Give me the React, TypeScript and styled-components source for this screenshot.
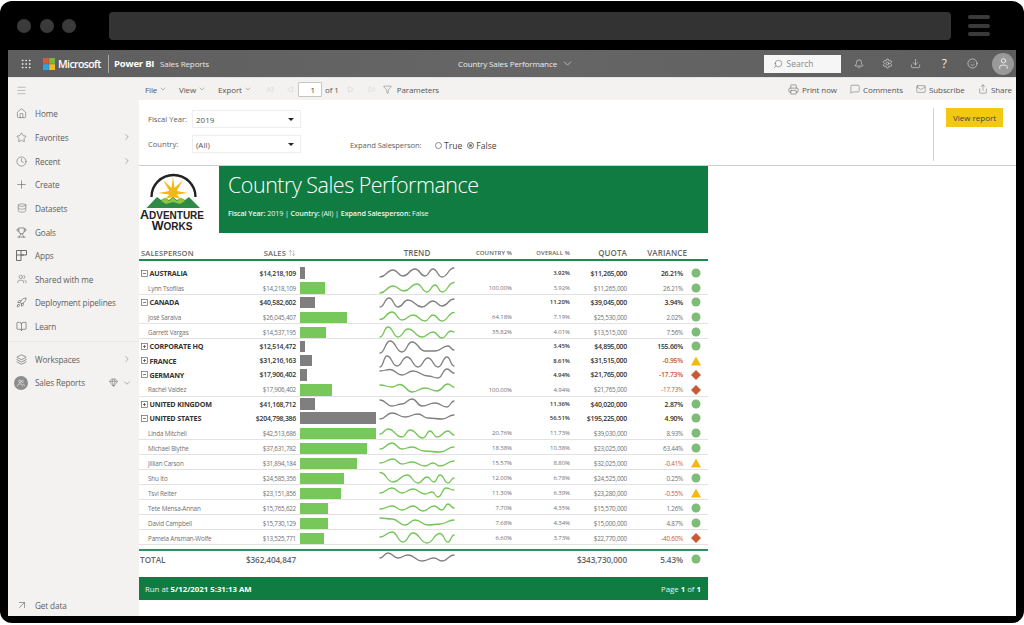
import React from 'react';
import styled, { createGlobalStyle } from 'styled-components';
import {
  Home, Star, Clock, Plus, Database, Trophy, Users, Rocket, BookOpen, ChevronRight, ChevronDown, Gem,
  ArrowUpRight, Bell, Settings, Download, Search, Smile, User, Printer, MessageSquare, Mail, Share,
  Filter, ArrowUpDown, Menu, Grip, SkipBack, Play, SkipForward, Layers
} from 'lucide-react';

const Global = createGlobalStyle`
  html, body { margin: 0; padding: 0; background: #fff; }
  body { font-family: "Open Sans", "Liberation Sans", sans-serif; overflow: hidden; }
  #root { width: 1024px; height: 625px; }
`;

const Frame = styled.div`
  margin-top: 1px; width: 1024px; height: 622px; box-sizing: border-box; background: #000;
  border-radius: 12px; padding: 0 8px 7px; display: flex; flex-direction: column;
`;
const BrowserBar = styled.div`
  height: 49px; flex: none; display: flex; align-items: center; padding: 0 26px 0 9px;
`;
const Dot = styled.span`
  width: 14px; height: 14px; border-radius: 50%; background: #3a3a3a; margin-right: 8.5px; flex: none;
`;
const AddressBar = styled.div`
  flex: 1; height: 28px; background: #333; border-radius: 4px; margin: 0 17px 0 24px;
`;
const Burger = styled.div`
  width: 22px; display: flex; flex-direction: column; gap: 4.5px;
  span { height: 4px; border-radius: 2px; background: #3a3a3a; }
`;
const AppHeader = styled.header`
  height: 28px; flex: none; background: linear-gradient(90deg,#5e5e5e,#666 50%,#5e5e5e); display: flex; align-items: center;
  color: #fff; border-bottom: 1px solid #e4e4e4; position: relative; box-sizing: border-box;
`;
const Waffle = styled.span`
  display: flex; width: 35px; justify-content: center; color: #eee;
`;
const MsLogo = styled.svg`
  width: 12px; height: 12px; flex: none;
`;
const MsWord = styled.span`
  font-size: 10.5px; font-weight: 600; margin-left: 3px; letter-spacing: -0.6px; width: 50px;
`;
const HeadDivider = styled.span`
  width: 1px; height: 18px; background: #aaa; margin-right: 5px;
`;
const PowerBi = styled.span`
  font-size: 9.5px; font-weight: 700; width: 46px; letter-spacing: -0.2px;
`;
const HeadLabel = styled.span`
  font-size: 8px; color: #e8e8e8; letter-spacing: -0.1px;
`;
const HeadCenter = styled.div`
  position: absolute; left: 450px; display: flex; align-items: center; gap: 4px; font-size: 8px; color: #eee; letter-spacing: -0.1px;
`;
const HeadRight = styled.div`
  margin-left: auto; display: flex; align-items: center; color: #eee;
`;
const SearchBox = styled.div`
  width: 77px; height: 18px; background: #f6f6f6; display: flex; align-items: center; gap: 4px; padding-left: 9px; box-sizing: border-box;
  font-size: 8.5px; color: #8a8a8a; margin-right: 4px;
`;
const HeadIcon = styled.span`
  width: 28.5px; display: flex; justify-content: center; font-size: 12px;
`;
const Avatar = styled.span`
  width: 22px; height: 22px; border-radius: 50%; background: #9a9a9a; display: flex; align-items: center; justify-content: center; margin-right: 2px; margin-left: 5px;
`;
const Body = styled.div`
  flex: 1; display: flex; min-height: 0; background: #fff;
`;
const Sidebar = styled.nav`
  width: 131px; flex: none; background: #f3f2f1; display: flex; flex-direction: column; color: #605e5c; padding-bottom: 1px;
`;
const SideTop = styled.div`
  height: 24px; display: flex; align-items: center; padding-left: 8px; color: #a8a8a8; flex: none;
`;
const NavRow = styled.div`
  height: 23.65px; flex: none; display: flex; align-items: center; font-size: 8.2px; padding-left: 7px; letter-spacing: -0.12px;
`;
const NavIcon = styled.span`
  width: 13px; display: flex; justify-content: center; margin-right: 7px;
`;
const NavEnd = styled.span`
  margin-left: auto; margin-right: 7px; display: flex; align-items: center; gap: 4px; color: #666;
`;
const NavDivider = styled.div`
  height: 1px; background: #e9e8e7; margin: 3px 0 5px;
`;
const BadgeIcon = styled.span`
  width: 14px; height: 14px; border-radius: 50%; background: #8c8c8c; color: #fff; display: flex; align-items: center; justify-content: center; margin: 0 7px 0 -1px;
`;
const BottomRow = styled(NavRow)`
  margin-top: auto; height: 20px;
`;
const Main = styled.main`
  flex: 1; min-width: 0; display: flex; flex-direction: column;
`;
const Toolbar = styled.div`
  height: 22px; flex: none; background: #f3f2f1; display: flex; align-items: center; font-size: 8px; color: #555; padding-left: 6px; letter-spacing: -0.1px;
`;
const Menu1 = styled.span<{ $w: number }>`
  display: flex; align-items: center; gap: 2px; width: ${p => p.$w}px;
`;
const Pager = styled.span<{ $w: number }>`
  display: flex; width: ${p => p.$w}px; color: #d4d3d2; justify-content: center;
`;
const PageInput = styled.span`
  width: 24px; height: 15px; box-sizing: border-box; border: 1px solid #c8c6c4; background: #fff; text-align: right; padding-right: 6px; line-height: 13px; border-radius: 1px; color: #444; margin-right: 3px;
`;
const ToolRight = styled.div`
  margin-left: auto; display: flex; align-items: center; margin-right: 3px;
`;
const ToolBtn = styled.span<{ $w: number }>`
  display: flex; align-items: center; gap: 3px; width: ${p => p.$w}px;
`;
const Params = styled.section`
  height: 66px; flex: none; box-sizing: border-box; border-bottom: 1.5px solid #d0d0d0; display: flex; padding: 8px 13px 4px 9px; font-size: 7.6px; color: #605e5c;
`;
const ParamGrid = styled.div`
  display: grid; grid-template-columns: 44px 109px; grid-auto-rows: 18px; row-gap: 7px; align-items: center; margin-top: 2px;
`;
const ParamSelect = styled.div`
  height: 18px; box-sizing: border-box; border: 1px solid #eee; display: flex; align-items: center; justify-content: space-between; padding: 0 6px 0 3px; font-size: 8px; color: #555;
  &::after { content: ""; border: 3px solid transparent; border-top: 3.5px solid #222; border-bottom: 0; }
`;
const Expand = styled.div`
  display: flex; align-items: center; margin: 28px 0 0 49px; height: 18px;
`;
const ExpandLabel = styled.span`
  width: 85px; letter-spacing: -0.1px;
`;
const Radio = styled.span<{ $on?: boolean }>`
  width: 7px; height: 7px; border-radius: 50%; border: 1px solid #888; box-sizing: border-box; background: ${p => p.$on ? '#777' : '#fff'};
  box-shadow: ${p => p.$on ? 'inset 0 0 0 1px #fff' : 'none'}; margin: 1px 2px 0 0;
`;
const RadioText = styled.span`
  font-size: 8.6px; color: #444; margin-right: 5px; padding-top: 1px;
`;
const ParamDivider = styled.div`
  width: 1px; background: #d4d4d4; height: 53px; margin-left: auto;
`;
const ViewReport = styled.button`
  width: 57px; height: 19px; border: 0; padding: 0; background: #f2c811; font: inherit; font-size: 8px; color: #444; margin-left: 12px;
`;
const Report = styled.div`
  width: 569px; flex: 1; display: flex; flex-direction: column; min-height: 0;
`;
const Banner = styled.div`
  display: flex; height: 67px; flex: none;
`;
const LogoCell = styled.div`
  width: 80px; flex: none; display: flex; flex-direction: column; align-items: center;
`;
const LogoSvg = styled.svg`
  width: 80px; height: 44px; flex: none;
`;
const LogoLine = styled.div`
  font-family: "Liberation Sans", sans-serif; font-weight: 700; font-size: 10px; line-height: 11px; height: 11px; color: #222; margin-left: -14px;
  &::first-letter { font-size: 12.5px; }
`;
const TitleBlock = styled.div`
  flex: 1; background: #107c41; color: #fff; padding-left: 9px; display: flex; flex-direction: column;
`;
const Title = styled.h1`
  font-size: 21.5px; font-weight: 300; margin: 4px 0 0; line-height: 30px; letter-spacing: -0.5px;
`;
const SubTitle = styled.div`
  font-size: 7.2px; margin-top: 8px; color: #eef6f0; letter-spacing: -0.1px;
  b { font-weight: 600; }
`;
const columns = '101px 56px 84px 74px 58px 58px 57px 56px 25px';
const HeadRow = styled.div`
  display: grid; grid-template-columns: ${columns}; height: 27.5px; align-items: end; box-sizing: border-box;
  border-bottom: 2px solid #1f8a50; flex: none; color: #666; font-weight: 600; margin-bottom: 5.5px;
`;
const HeadCell = styled.div<{ $small?: boolean; $align?: string; $span?: number; $pr?: number }>`
  font-size: ${p => p.$small ? 6 : p.$align === 'left' ? 7.6 : 8}px; text-align: ${p => p.$align || 'right'}; white-space: nowrap; line-height: 12px;
  grid-column: span ${p => p.$span || 1}; padding-right: ${p => p.$pr || 0}px; padding-left: ${p => p.$align === 'left' ? 2 : 0}px;
  letter-spacing: 0.1px;
`;
const SortCell = styled.div`
  font-size: 7.6px; display: flex; justify-content: flex-end; align-items: center; gap: 2px; line-height: 12px; letter-spacing: .1px;
`;
const Row = styled.div<{ $group?: boolean; $total?: boolean }>`
  display: grid; grid-template-columns: ${columns}; align-items: center; flex: none;
  height: ${p => p.$total ? 16 : p.$group ? 14.2 : 15}px; box-sizing: border-box;
  padding-top: ${p => (p.$group || p.$total) ? 0 : 1}px;
  border-bottom: ${p => (p.$group || p.$total) ? '0' : '1px solid #e2e2e2'};
  font-size: ${p => p.$total ? 8.2 : p.$group ? 6.9 : 6.3}px; font-weight: ${p => (p.$group || p.$total) ? 600 : 400};
  letter-spacing: ${p => p.$total ? -0.1 : p.$group ? -0.25 : -0.23}px;
  color: ${p => p.$total ? '#666' : p.$group ? '#333' : '#707070'};
`;
const NameCell = styled.div<{ $group?: boolean; $total?: boolean }>`
  display: flex; align-items: center; white-space: nowrap; gap: 1.5px; padding-left: ${p => p.$group ? 2 : p.$total ? 1 : 9}px;
  font-weight: ${p => p.$group ? 700 : 'inherit'}; font-size: ${p => p.$group ? '7.2px' : 'inherit'};
  letter-spacing: ${p => p.$group ? '-0.2px' : p.$total ? '0' : '-0.15px'};
`;
const Num = styled.div<{ $neg?: boolean; $small?: boolean }>`
  text-align: right; white-space: nowrap; color: ${p => p.$neg ? '#c9583a' : 'inherit'}; font-size: ${p => p.$small ? '6px' : 'inherit'}; letter-spacing: ${p => p.$small ? '-0.05px' : 'inherit'};
`;
const BarCell = styled.div`
  padding-left: 4px; display: flex; align-items: center;
`;
const Bar = styled.div<{ $group?: boolean }>`
  height: 11.5px; background: ${p => p.$group ? '#7f7f7f' : '#77c75a'};
`;
const TrendSvg = styled.svg`
  width: 74px; height: 14px; display: block; overflow: visible;
`;
const StatusCell = styled.div`
  display: flex; justify-content: flex-end; padding-right: 7px;
`;
const EndLine = styled.div`
  height: 2px; background: #2f9160; margin-top: 4px; flex: none;
`;
const Footer = styled.footer`
  height: 23px; margin-top: 10px; background: #107c41; color: #eaf4ee; display: flex; align-items: center; justify-content: space-between; padding: 0 7px 0 6px; font-size: 7.8px; flex: none;
  b { font-weight: 700; color: #fff; }
`;

type RowData = {
  name: string; group?: boolean; exp?: '+' | '-'; sales: number; trend: number[]; country?: string; overall: string; quota: string; variance: string; status: 'ok' | 'warn' | 'bad';
};
const rows: RowData[] = [
  { name: 'AUSTRALIA', group: true, exp: '-', sales: 14218109, trend: [0,11,13,4,23,10,35,3,45,10,53,3,62,11,74,2], overall: '3.92%', quota: '$11,265,000', variance: '26.21%', status: 'ok' },
  { name: 'Lynn Tsoflias', sales: 14218109, trend: [0,12,13,5,24,10,37,3,47,11,55,4,62,11,74,1.5], country: '100.00%', overall: '3.92%', quota: '$11,265,000', variance: '26.21%', status: 'ok' },
  { name: 'CANADA', group: true, exp: '-', sales: 40582602, trend: [0,12,9,3,18,12,28,5,42,12,53,6,62,11,74,4], overall: '11.20%', quota: '$39,045,000', variance: '3.94%', status: 'ok' },
  { name: 'José Saraiva', sales: 26045407, trend: [0,9.5,12,2,22,10,33,5,45,11,53,5,62,11,74,2.5], country: '64.18%', overall: '7.19%', quota: '$25,530,000', variance: '2.02%', status: 'ok' },
  { name: 'Garrett Vargas', sales: 14537195, trend: [0,12,8,2,18,12,28,4,42,12,53,7,62,13,71,6,74,7], country: '35.82%', overall: '4.01%', quota: '$13,515,000', variance: '7.56%', status: 'ok' },
  { name: 'CORPORATE HQ', group: true, exp: '+', sales: 12514472, trend: [0,14,10,2,22,13,32,3,45,12,55,12,68,7,74,11], overall: '3.45%', quota: '$4,895,000', variance: '155.66%', status: 'ok' },
  { name: 'FRANCE', group: true, exp: '+', sales: 31216163, trend: [0,13,7,2,17,12,27,3,38,13,48,4,58,13,67,3,74,12], overall: '8.61%', quota: '$31,515,000', variance: '-0.95%', status: 'warn' },
  { name: 'GERMANY', group: true, exp: '-', sales: 17906402, trend: [0,3,10,1.5,22,7,33,3,48,8,58,10,67,1,74,5], overall: '4.94%', quota: '$21,765,000', variance: '-17.73%', status: 'bad' },
  { name: 'Rachel Valdez', sales: 17906402, trend: [0,2,12,4,20,1.5,32,9,45,5,57,8,68,1,74,4], country: '100.00%', overall: '4.94%', quota: '$21,765,000', variance: '-17.73%', status: 'bad' },
  { name: 'UNITED KINGDOM', group: true, exp: '+', sales: 41168712, trend: [0,3,12,9,22,7,32,2,42,9,55,6,67,10,74,4], overall: '11.36%', quota: '$40,020,000', variance: '2.87%', status: 'ok' },
  { name: 'UNITED STATES', group: true, exp: '-', sales: 204798386, trend: [0,8,12,2,25,6,38,3,48,7,62,8,74,4], overall: '56.51%', quota: '$195,225,000', variance: '4.90%', status: 'ok' },
  { name: 'Linda Mitchell', sales: 42513686, trend: [0,8,8,3,22,11,30,4,43,12,50,5,57,11,68,5,74,9], country: '20.76%', overall: '11.73%', quota: '$39,030,000', variance: '8.93%', status: 'ok' },
  { name: 'Michael Blythe', sales: 37631782, trend: [0,8,12,2,22,8,32,6,44,10,60,11,74,6], country: '18.38%', overall: '10.38%', quota: '$23,025,000', variance: '63.44%', status: 'ok' },
  { name: 'Jillian Carson', sales: 31894184, trend: [0,7,13,3,22,8,32,6,45,10,53,7,60,10,74,5], country: '15.57%', overall: '8.80%', quota: '$32,025,000', variance: '-0.41%', status: 'warn' },
  { name: 'Shu Ito', sales: 24585356, trend: [0,1.5,13,11,27,4,38,12,47,6,54,11,60,4,68,12,74,7], country: '12.00%', overall: '6.78%', quota: '$24,525,000', variance: '0.25%', status: 'ok' },
  { name: 'Tsvi Reiter', sales: 23151856, trend: [0,7,12,2,22,7,33,3,45,8,52,6,58,11,66,2,74,4], country: '11.30%', overall: '6.39%', quota: '$23,280,000', variance: '-0.55%', status: 'warn' },
  { name: 'Tete Mensa-Annan', sales: 15765622, trend: [0,8,12,5,22,9,33,5,43,10,54,5,62,9,68,3,74,7], country: '7.70%', overall: '4.35%', quota: '$15,570,000', variance: '1.26%', status: 'ok' },
  { name: 'David Campbell', sales: 15730129, trend: [0,2,12,3,25,9,35,4,48,9,60,8,74,4], country: '7.68%', overall: '4.34%', quota: '$15,000,000', variance: '4.87%', status: 'ok' },
  { name: 'Pamela Ansman-Wolfe', sales: 13525771, trend: [0,6,12,1,23,11,33,2,47,12,60,2.5,68,11,74,4], country: '6.60%', overall: '3.73%', quota: '$22,770,000', variance: '-40.60%', status: 'bad' },
];

const wave = (p: number[]) => {
  let d = `M${p[0]} ${p[1]}`;
  for (let i = 2; i < p.length; i += 2) {
    const m = (p[i - 2] + p[i]) / 2;
    d += ` C${m} ${p[i - 1]} ${m} ${p[i + 1]} ${p[i]} ${p[i + 1]}`;
  }
  return d;
};

const Trend = ({ data, group }: { data: number[]; group?: boolean }) => (
  <TrendSvg viewBox="0 0 74 14">
    <path d={wave(data)} fill="none" stroke={group ? '#808080' : '#74c557'} strokeWidth="1.3" strokeLinecap="round" />
  </TrendSvg>
);

const Status = ({ kind }: { kind: RowData['status'] }) => (
  <svg width="10" height="10" viewBox="0 0 10 10">
    {kind === 'ok' && <circle cx="5" cy="5" r="4.5" fill="#7fbc78" />}
    {kind === 'warn' && <path d="M5 .5 L10 9.5 H0 Z" fill="#f2b90f" />}
    {kind === 'bad' && <path d="M5 0 L10 5 L5 10 L0 5 Z" fill="#c85b36" />}
  </svg>
);

const Expander = ({ kind }: { kind: '+' | '-' }) => (
  <svg width="7" height="7" viewBox="0 0 7 7">
    <rect x=".5" y=".5" width="6" height="6" fill="none" stroke="#666" strokeWidth=".7" />
    <path d={kind === '+' ? 'M2 3.5H5M3.5 2V5' : 'M2 3.5H5'} stroke="#444" strokeWidth=".7" />
  </svg>
);

const AppsIcon = () => (
  <svg width="11" height="11" viewBox="0 0 11 11" fill="none" stroke="#605e5c" strokeWidth=".9">
    <path d="M.5.5H5V10.5H.5ZM5 .5H10.5V5H.5M5 5H8" />
  </svg>
);

const navItems: [string, React.ReactNode, boolean?][] = [
  ['Home', <Home size={11} strokeWidth={1.2} />],
  ['Favorites', <Star size={11} strokeWidth={1.2} />, true],
  ['Recent', <Clock size={11} strokeWidth={1.2} />, true],
  ['Create', <Plus size={13} strokeWidth={1.1} />],
  ['Datasets', <Database size={10} strokeWidth={1.2} />],
  ['Goals', <Trophy size={11} strokeWidth={1.4} />],
  ['Apps', <AppsIcon />],
  ['Shared with me', <Users size={10} strokeWidth={1.2} />],
  ['Deployment pipelines', <Rocket size={11} strokeWidth={1.4} />],
  ['Learn', <BookOpen size={11} strokeWidth={1.4} />],
];

const money = (n: number) => '$' + n.toLocaleString('en-US');

export default function App() {
  return (
    <>
      <Global />
      <Frame>
        <BrowserBar>
          <Dot /><Dot /><Dot />
          <AddressBar />
          <Burger><span /><span /><span /></Burger>
        </BrowserBar>
        <AppHeader>
          <Waffle><Grip size={12} strokeWidth={1.6} /></Waffle>
          <MsLogo viewBox="0 0 12 12">
            <rect width="5.8" height="5.8" fill="#d9593a" />
            <rect x="6.2" width="5.8" height="5.8" fill="#79b83a" />
            <rect y="6.2" width="5.8" height="5.8" fill="#2ea3e0" />
            <rect x="6.2" y="6.2" width="5.8" height="5.8" fill="#f6bb1b" />
          </MsLogo>
          <MsWord>Microsoft</MsWord>
          <HeadDivider />
          <PowerBi>Power BI</PowerBi>
          <HeadLabel>Sales Reports</HeadLabel>
          <HeadCenter>Country Sales Performance <ChevronDown size={13} strokeWidth={1.1} /></HeadCenter>
          <HeadRight>
            <SearchBox><Search size={10} strokeWidth={1.2} color="#555" style={{ transform: 'scaleX(-1)' }} />Search</SearchBox>
            <HeadIcon><Bell size={10} strokeWidth={1.4} /></HeadIcon>
            <HeadIcon><Settings size={11} strokeWidth={1.3} /></HeadIcon>
            <HeadIcon><Download size={11} strokeWidth={1.2} /></HeadIcon>
            <HeadIcon>?</HeadIcon>
            <HeadIcon><Smile size={11} strokeWidth={1.3} /></HeadIcon>
            <Avatar><User size={13} strokeWidth={1.4} color="#fff" /></Avatar>
          </HeadRight>
        </AppHeader>
        <Body>
          <Sidebar>
            <SideTop><Menu size={11} strokeWidth={1.6} /></SideTop>
            {navItems.map(([label, icon, more]) => (
              <NavRow key={label}>
                <NavIcon>{icon}</NavIcon>{label}
                {more && <NavEnd><ChevronRight size={10} strokeWidth={1.2} /></NavEnd>}
              </NavRow>
            ))}
            <NavDivider />
            <NavRow>
              <NavIcon><Layers size={11} strokeWidth={1.4} /></NavIcon>Workspaces
              <NavEnd><ChevronRight size={10} strokeWidth={1.2} /></NavEnd>
            </NavRow>
            <NavRow>
              <BadgeIcon><Users size={8} strokeWidth={1.6} /></BadgeIcon>Sales Reports
              <NavEnd><Gem size={9} strokeWidth={1.4} /> <ChevronDown size={10} strokeWidth={1.2} /></NavEnd>
            </NavRow>
            <BottomRow>
              <NavIcon><ArrowUpRight size={12} strokeWidth={1.2} /></NavIcon>Get data
            </BottomRow>
          </Sidebar>
          <Main>
            <Toolbar>
              <Menu1 $w={34}>File <ChevronDown size={8} strokeWidth={1.2} /></Menu1>
              <Menu1 $w={39}>View <ChevronDown size={8} strokeWidth={1.2} /></Menu1>
              <Menu1 $w={40}>Export <ChevronDown size={8} strokeWidth={1.2} /></Menu1>
              <Pager $w={25}><SkipBack size={7} /></Pager>
              <Pager $w={15}><Play size={7} style={{ transform: 'scaleX(-1)' }} /></Pager>
              <PageInput>1</PageInput>
              of 1
              <Pager $w={24}><Play size={7} /></Pager>
              <Pager $w={17}><SkipForward size={7} /></Pager>
              <Pager $w={16} style={{ color: '#555', marginRight: 1 }}><Filter size={9} strokeWidth={1.1} /></Pager>
              Parameters
              <ToolRight>
                <ToolBtn $w={62}><Printer size={11} strokeWidth={1.1} />Print now</ToolBtn>
                <ToolBtn $w={66}><MessageSquare size={10} strokeWidth={1.1} />Comments</ToolBtn>
                <ToolBtn $w={62}><Mail size={10} strokeWidth={1.1} />Subscribe</ToolBtn>
                <ToolBtn $w={35}><Share size={10} strokeWidth={1.1} />Share</ToolBtn>
              </ToolRight>
            </Toolbar>
            <Params>
              <ParamGrid>
                <span>Fiscal Year:</span><ParamSelect>2019</ParamSelect>
                <span>Country:</span><ParamSelect>(All)</ParamSelect>
              </ParamGrid>
              <Expand>
                <ExpandLabel>Expand Salesperson:</ExpandLabel>
                <Radio /><RadioText>True</RadioText>
                <Radio $on /><RadioText>False</RadioText>
              </Expand>
              <ParamDivider />
              <ViewReport>View report</ViewReport>
            </Params>
            <Report>
              <Banner>
                <LogoCell>
                  <LogoSvg viewBox="0 0 80 44">
                    <path d="M12.5 31 A22 22 0 1 1 56.5 31" fill="none" stroke="#222" strokeWidth="2.4" />
                    <path d="M34 10.5 L35.5 22 L44 14 L37.5 25 L49 27 L37.5 28.5 L42 33 L34 31 L26 33 L30.5 28.5 L19 27 L30.5 25 L24 14 L32.5 22 Z" fill="#f3b815" />
                    <circle cx="34" cy="27" r="4.5" fill="#f3b815" />
                    <path d="M7.5 42 L18 31 L22 34 L26 32 L30 34 L34 31 L38 34 L42 32 L46 34 L50 31 L61 42 Z" fill="#2f8a45" />
                    <path d="M22 35 L26 31.5 L30 35 L34 31.5 L38 35 L42 31.5 L46 35 L41 38 L34 36 L27 38 Z" fill="#8cc63f" />
                  </LogoSvg>
                  <LogoLine>ADVENTURE</LogoLine>
                  <LogoLine>WORKS</LogoLine>
                </LogoCell>
                <TitleBlock>
                  <Title>Country Sales Performance</Title>
                  <SubTitle><b>Fiscal Year:</b> 2019 | <b>Country:</b> (All) | <b>Expand Salesperson:</b> False</SubTitle>
                </TitleBlock>
              </Banner>
              <HeadRow>
                <HeadCell $align="left">SALESPERSON</HeadCell>
                <SortCell>SALES <ArrowUpDown size={8} strokeWidth={1} /></SortCell>
                <div />
                <HeadCell $align="center">TREND</HeadCell>
                <HeadCell $small>COUNTRY %</HeadCell>
                <HeadCell $small>OVERALL %</HeadCell>
                <HeadCell>QUOTA</HeadCell>
                <HeadCell $span={2} $pr={21}>VARIANCE</HeadCell>
              </HeadRow>
              {rows.map(r => (
                <Row key={r.name} $group={r.group}>
                  <NameCell $group={r.group}>{r.exp && <Expander kind={r.exp} />}{r.name}</NameCell>
                  <Num>{money(r.sales)}</Num>
                  <BarCell>
                    <Bar $group={r.group} style={{ width: `${(r.sales / (r.group ? 204798386 : 42513686)) * 76}px` }} />
                  </BarCell>
                  <Trend data={r.trend} group={r.group} />
                  <Num $small>{r.country}</Num>
                  <Num $small>{r.overall}</Num>
                  <Num>{r.quota}</Num>
                  <Num $neg={r.variance.startsWith('-')}>{r.variance}</Num>
                  <StatusCell><Status kind={r.status} /></StatusCell>
                </Row>
              ))}
              <EndLine />
              <Row $total>
                <NameCell $total>TOTAL</NameCell>
                <Num>$362,404,847</Num>
                <div />
                <Trend data={[0,6,8,1,18,6,28,3,42,9,54,6,62,9,74,3]} group />
                <div />
                <div />
                <Num>$343,730,000</Num>
                <Num>5.43%</Num>
                <StatusCell><Status kind="ok" /></StatusCell>
              </Row>
              <Footer>
                <span>Run at <b>5/12/2021 5:31:13 AM</b></span>
                <span>Page <b>1</b> of <b>1</b></span>
              </Footer>
            </Report>
          </Main>
        </Body>
      </Frame>
    </>
  );
}
